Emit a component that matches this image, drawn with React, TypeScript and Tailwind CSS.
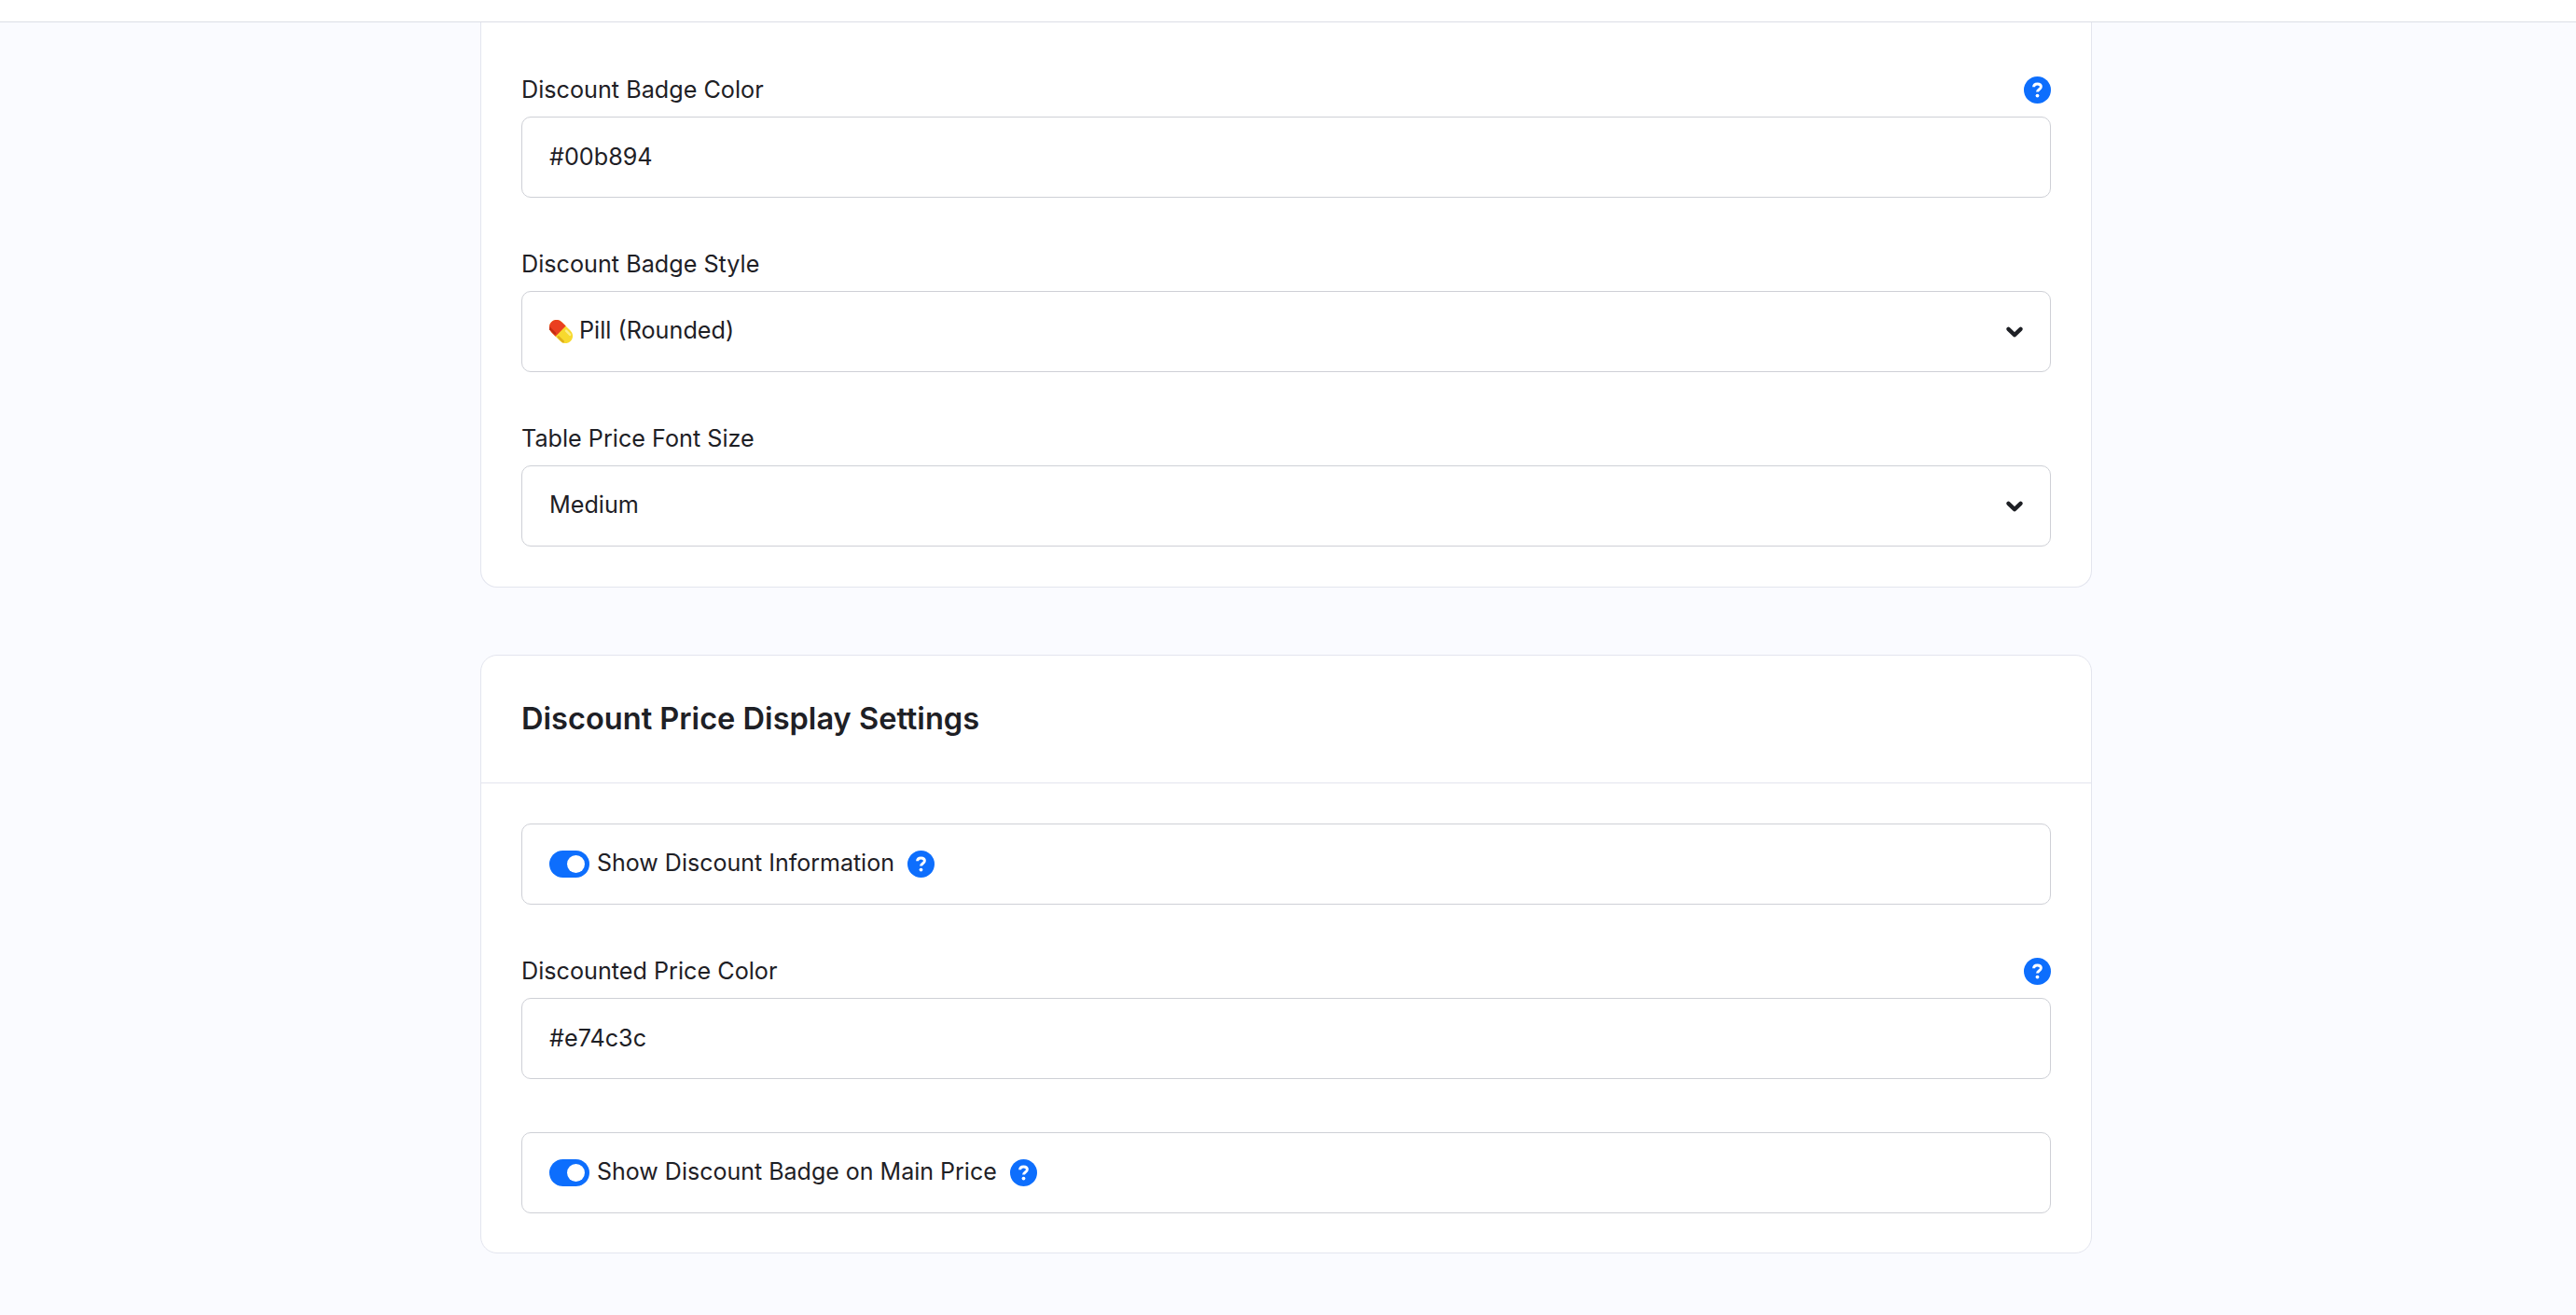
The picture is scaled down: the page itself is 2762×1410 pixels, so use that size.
import React from 'react';

const Chevron = () => (
  <svg viewBox="0 0 16 16" className="h-[18px] w-[18px] shrink-0">
    <path d="M2.2 5.2l5.8 5.6 5.8-5.6" fill="none" stroke="#1e2025" strokeWidth="3.8" strokeLinecap="round" strokeLinejoin="round" />
  </svg>
);

const Help = () => (
  <svg viewBox="0 0 29 29" className="h-[29px] w-[29px] shrink-0">
    <circle cx="14.5" cy="14.5" r="14.5" fill="#0d6efd" />
    <path d="M10.6 11.3c0-2.2 1.7-3.3 3.9-3.3s3.9 1.1 3.9 3.1c0 2.7-3.9 2.6-3.9 5.5" fill="none" stroke="#fff" strokeWidth="2.9" />
    <circle cx="14.5" cy="20.6" r="1.9" fill="#fff" />
  </svg>
);

const Pill = () => (
  <svg viewBox="0 0 24 24" className="mr-[7px] h-[25px] w-[25px] shrink-0">
    <g transform="rotate(45 12 12)">
      <rect x="-2" y="4.5" width="28" height="15" rx="7.5" fill="#f7d92e" />
      <path d="M11.5 4.5H5.5a7.5 7.5 0 0 0 0 15h6z" fill="#ea3f20" />
      <rect x="14" y="6.5" width="8" height="2.4" rx="1.2" fill="#fcee85" />
      <rect x="13" y="16.6" width="9" height="2.4" rx="1.2" fill="#e0b01c" />
      <rect x="0" y="16.6" width="10" height="2.4" rx="1.2" fill="#c22c12" />
    </g>
  </svg>
);

const Field = ({ label, help, children }: { label: string; help?: boolean; children: React.ReactNode }) => (
  <div>
    <div className="mb-[14px] mt-[1px] flex h-[29px] items-center justify-between">
      <label className="text-[25.2px]">{label}</label>
      {help && <Help />}
    </div>
    {children}
  </div>
);

const TextInput = ({ value }: { value: string }) => (
  <input
    readOnly
    value={value}
    className="h-[87px] w-full rounded-[10px] border border-[#ced0d6] bg-white px-[29px] pb-[2px] text-[25.2px] outline-none"
  />
);

const Select = ({ value, pill }: { value: string; pill?: boolean }) => (
  <div className="flex h-[87px] items-center rounded-[10px] border border-[#ced0d6] bg-white px-[29px] text-[25.2px]">
    {pill && <Pill />}
    <span className="flex-1 pb-[2px]">{value}</span>
    <Chevron />
  </div>
);

const Toggle = ({ label }: { label: string }) => (
  <div className="flex h-[87px] items-center rounded-[10px] border border-[#ced0d6] bg-white pl-[29px] text-[25px]">
    <span className="mr-[8px] flex h-[29px] w-[43px] items-center justify-end rounded-full bg-[#0d6efd] pr-[5px]">
      <span className="h-[19px] w-[19px] rounded-full bg-white" />
    </span>
    <span className="mr-[14px] pb-[2px]">{label}</span>
    <Help />
  </div>
);

export default function App() {
  return (
    <div className="flex h-[1410px] flex-col overflow-hidden bg-[#fafbff] font-['Inter',sans-serif] text-[#1e2025]">
      <div className="h-[24px] shrink-0 border-b border-[#dcdee6] bg-white" />
      <div className="flex justify-center pr-[4px]">
        <div className="w-[1728px]">
          <section className="flex flex-col gap-[56px] rounded-b-[18px] border border-t-0 border-[#e3e5ee] bg-white px-[43px] pb-[43px] pt-[57px]">
            <Field label="Discount Badge Color" help>
              <TextInput value="#00b894" />
            </Field>
            <Field label="Discount Badge Style">
              <Select value="Pill (Rounded)" pill />
            </Field>
            <Field label="Table Price Font Size">
              <Select value="Medium" />
            </Field>
          </section>

          <section className="mt-[72px] rounded-[18px] border border-[#e3e5ee] bg-white">
            <div className="flex h-[137px] items-center border-b border-[#e3e5ee] px-[43px] pb-[2px]">
              <h2 className="text-[32.6px] font-semibold">Discount Price Display Settings</h2>
            </div>
            <div className="flex flex-col gap-[56px] px-[43px] pb-[42px] pt-[43px]">
              <Toggle label="Show Discount Information" />
              <Field label="Discounted Price Color" help>
                <TextInput value="#e74c3c" />
              </Field>
              <div className="mt-[1px]">
                <Toggle label="Show Discount Badge on Main Price" />
              </div>
            </div>
          </section>
        </div>
      </div>
    </div>
  );
}
